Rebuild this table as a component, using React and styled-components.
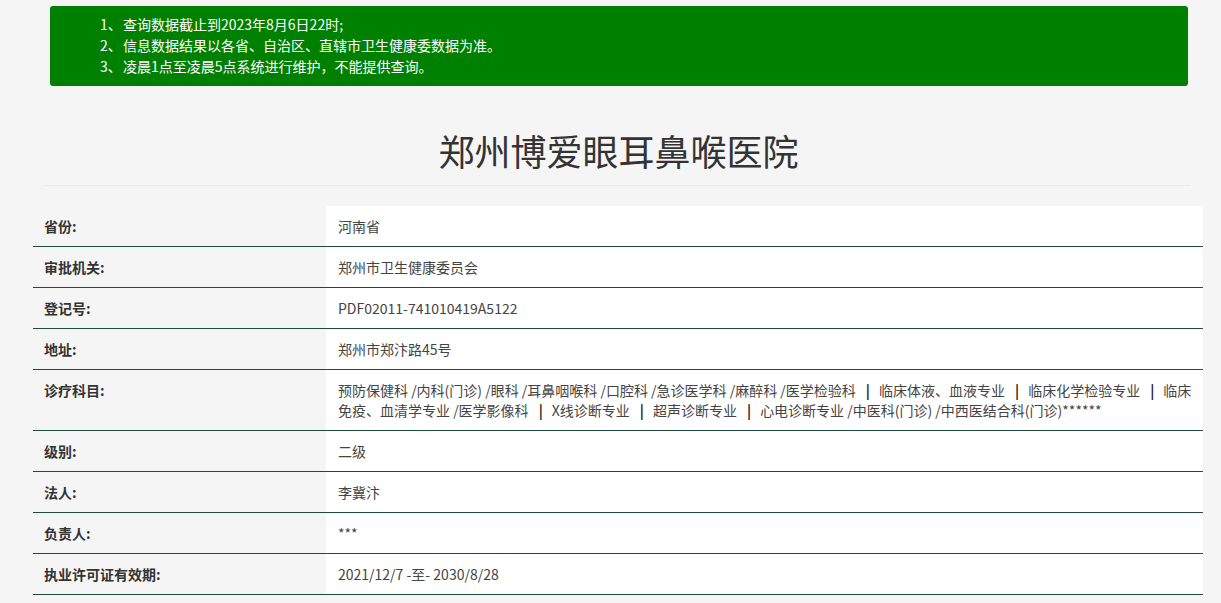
import React from "react";
import styled, { createGlobalStyle } from "styled-components";

const GlobalStyle = createGlobalStyle`
  html, body {
    margin: 0;
    padding: 0;
    background: #f5f5f5;
  }
  body {
    font-family: "Microsoft YaHei", "Noto Sans CJK SC", "Liberation Sans", sans-serif;
    color: #333;
    font-size: 14px;
  }
`;

const notices = [
  "查询数据截止到2023年8月6日22时;",
  "信息数据结果以各省、自治区、直辖市卫生健康委数据为准。",
  "凌晨1点至凌晨5点系统进行维护，不能提供查询。",
];

const rows = [
  { label: "省份:", value: "河南省" },
  { label: "审批机关:", value: "郑州市卫生健康委员会" },
  { label: "登记号:", value: "PDF02011-741010419A5122" },
  { label: "地址:", value: "郑州市郑汴路45号" },
  {
    label: "诊疗科目:",
    value:
      "预防保健科 /内科(门诊) /眼科 /耳鼻咽喉科 /口腔科 /急诊医学科 /麻醉科 /医学检验科 | 临床体液、血液专业 | 临床化学检验专业 | 临床免疫、血清学专业 /医学影像科 | X线诊断专业 | 超声诊断专业 | 心电诊断专业 /中医科(门诊) /中西医结合科(门诊)******",
  },
  { label: "级别:", value: "二级" },
  { label: "法人:", value: "李冀汴" },
  { label: "负责人:", value: "***" },
  { label: "执业许可证有效期:", value: "2021/12/7 -至- 2030/8/28" },
];

// the "|" separators are drawn darker and heavier than the text around them
const renderValue = (text) =>
  text.split(" | ").map((part, i) => (
    <React.Fragment key={i}>
      {i > 0 && <Sep>|</Sep>}
      {part}
    </React.Fragment>
  ));

const App = () => {
  return (
    <Page>
      <GlobalStyle />
      <Notice>
        {notices.map((n, i) => (
          <NoticeLine key={i}>
            <Num>{i + 1}、</Num>
            {n}
          </NoticeLine>
        ))}
      </Notice>
      <Title>郑州博爱眼耳鼻喉医院</Title>
      <Divider />
      <InfoTable>
        {rows.map((r) => (
          <Row key={r.label}>
            <Label>{r.label}</Label>
            <Value>{renderValue(r.value)}</Value>
          </Row>
        ))}
      </InfoTable>
    </Page>
  );
};

export default App;

const Page = styled.div`
  padding: 6px 0 20px;
  display: flex;
  flex-direction: column;
`;

const Notice = styled.div`
  margin: 0 33px 0 50px;
  padding: 8px 0 9px 50px;
  background: #008000;
  border-radius: 3px;
  color: #fff;
  font-size: 14px;
  line-height: 21px;
`;

const NoticeLine = styled.div`
  white-space: nowrap;
`;

const Num = styled.span`
  display: inline-block;
  width: 23px;
`;

const Title = styled.h1`
  margin: 44px 0 15px;
  padding-left: 16px;
  text-align: center;
  font-size: 36px;
  font-weight: 400;
  line-height: 40px;
  color: #333;
`;

const Divider = styled.div`
  height: 1px;
  margin: 0 31px 20px 45px;
  background: #eaeaea;
`;

const InfoTable = styled.div`
  margin: 0 18px 0 33px;
  display: flex;
  flex-direction: column;
`;

const Row = styled.div`
  display: grid;
  grid-template-columns: 293px 1fr;
  border-bottom: 1px solid #1e4d3c;
  line-height: 20px;
`;

const Label = styled.div`
  padding: 10px 11px;
  font-weight: 700;
  color: #333;
`;

const Value = styled.div`
  padding: 10px 7px 10px 12px;
  background: #fff;
  color: #444;
`;

const Sep = styled.span`
  display: inline-block;
  margin: 0 9px 0 10px;
  font-weight: 700;
  color: #222;
`;
